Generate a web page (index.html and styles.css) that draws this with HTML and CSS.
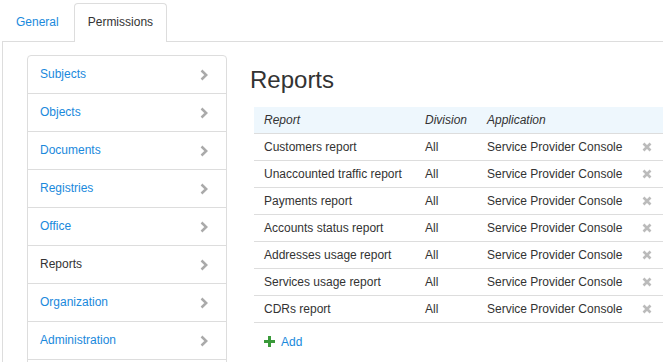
FILE: index.html
```html
<html>
<head>
    <title>Permissions</title>
    <link rel="stylesheet" href="styles.css">
</head>
<body>
<div class="wrap">
    <div class="tabs">
        <a class="tab" href="#">General</a>
        <a class="tab active" href="#">Permissions</a>
    </div>
    <div class="pane">
        <ul class="side">
            <li><a href="#">Subjects</a><svg class="chev" width="8" height="12" viewBox="0 0 8 12"><path d="M1.5 1.5 L6.2 6 L1.5 10.5" /></svg></li>
            <li><a href="#">Objects</a><svg class="chev" width="8" height="12" viewBox="0 0 8 12"><path d="M1.5 1.5 L6.2 6 L1.5 10.5" /></svg></li>
            <li><a href="#">Documents</a><svg class="chev" width="8" height="12" viewBox="0 0 8 12"><path d="M1.5 1.5 L6.2 6 L1.5 10.5" /></svg></li>
            <li><a href="#">Registries</a><svg class="chev" width="8" height="12" viewBox="0 0 8 12"><path d="M1.5 1.5 L6.2 6 L1.5 10.5" /></svg></li>
            <li><a href="#">Office</a><svg class="chev" width="8" height="12" viewBox="0 0 8 12"><path d="M1.5 1.5 L6.2 6 L1.5 10.5" /></svg></li>
            <li class="current"><span>Reports</span><svg class="chev" width="8" height="12" viewBox="0 0 8 12"><path d="M1.5 1.5 L6.2 6 L1.5 10.5" /></svg></li>
            <li><a href="#">Organization</a><svg class="chev" width="8" height="12" viewBox="0 0 8 12"><path d="M1.5 1.5 L6.2 6 L1.5 10.5" /></svg></li>
            <li><a href="#">Administration</a><svg class="chev" width="8" height="12" viewBox="0 0 8 12"><path d="M1.5 1.5 L6.2 6 L1.5 10.5" /></svg></li>
            <li class="more"></li>
        </ul>
        <div class="main">
            <h1>Reports</h1>
            <table class="grid">
                <thead>
                    <tr><th class="c1">Report</th><th class="c2">Division</th><th class="c3">Application</th><th class="c4"></th></tr>
                </thead>
                <tbody>
                    <tr><td>Customers report</td><td>All</td><td>Service Provider Console</td><td><svg class="del" width="10" height="10" viewBox="0 0 10 10"><path d="M1.5 1.5 L8.5 8.5 M8.5 1.5 L1.5 8.5" /></svg></td></tr>
                    <tr><td>Unaccounted traffic report</td><td>All</td><td>Service Provider Console</td><td><svg class="del" width="10" height="10" viewBox="0 0 10 10"><path d="M1.5 1.5 L8.5 8.5 M8.5 1.5 L1.5 8.5" /></svg></td></tr>
                    <tr><td>Payments report</td><td>All</td><td>Service Provider Console</td><td><svg class="del" width="10" height="10" viewBox="0 0 10 10"><path d="M1.5 1.5 L8.5 8.5 M8.5 1.5 L1.5 8.5" /></svg></td></tr>
                    <tr><td>Accounts status report</td><td>All</td><td>Service Provider Console</td><td><svg class="del" width="10" height="10" viewBox="0 0 10 10"><path d="M1.5 1.5 L8.5 8.5 M8.5 1.5 L1.5 8.5" /></svg></td></tr>
                    <tr><td>Addresses usage report</td><td>All</td><td>Service Provider Console</td><td><svg class="del" width="10" height="10" viewBox="0 0 10 10"><path d="M1.5 1.5 L8.5 8.5 M8.5 1.5 L1.5 8.5" /></svg></td></tr>
                    <tr><td>Services usage report</td><td>All</td><td>Service Provider Console</td><td><svg class="del" width="10" height="10" viewBox="0 0 10 10"><path d="M1.5 1.5 L8.5 8.5 M8.5 1.5 L1.5 8.5" /></svg></td></tr>
                    <tr><td>CDRs report</td><td>All</td><td>Service Provider Console</td><td><svg class="del" width="10" height="10" viewBox="0 0 10 10"><path d="M1.5 1.5 L8.5 8.5 M8.5 1.5 L1.5 8.5" /></svg></td></tr>
                </tbody>
            </table>
            <a class="add" href="#"><svg width="11" height="11" viewBox="0 0 11 11"><path d="M5.5 0 V11 M0 5.5 H11" /></svg>Add</a>
        </div>
    </div>
</div>
</body>
</html>
```

FILE: styles.css
```css
html, body {
    margin: 0;
    background-color: #fff;
    color: #333;
    font-family: "Liberation Sans", Arial, Helvetica, sans-serif;
    font-size: 12px;
    overflow: hidden;
}

a {
    color: #1a89dc;
    text-decoration: none;
}

.wrap {
    margin-left: 2px;
}

.tabs {
    display: flex;
    padding-top: 3px;
    border-bottom: 1px solid #ddd;
}

.tab {
    display: block;
    padding: 9px 13px 11px;
    line-height: 18px;
    border: 1px solid transparent;
    border-bottom: none;
    border-radius: 4px 4px 0 0;
    margin-right: 1px;
    margin-bottom: -1px;
}

.tab.active {
    color: #333;
    background-color: #fff;
    border-color: #ddd;
}

.pane {
    display: flex;
    align-items: flex-start;
    border-left: 1px solid #ddd;
    padding: 13px 0 0 24px;
}

.side {
    list-style: none;
    margin: 0;
    padding: 0;
    width: 198px;
    flex: none;
    border: 1px solid #ddd;
    border-radius: 4px 4px 0 0;
}

.side li {
    display: flex;
    align-items: center;
    justify-content: space-between;
    height: 37px;
    padding: 0 18px 0 12px;
    border-top: 1px solid #ddd;
}

.side li:first-child {
    border-top: none;
}

.side li a, .side li span {
    margin-top: -2px;
}

.chev path {
    fill: none;
    stroke: #aaa;
    stroke-width: 2.5;
}

.main {
    flex: 1;
    margin-left: 23px;
}

h1 {
    margin: 11px 0 13px;
    font-size: 24px;
    line-height: 28px;
    font-weight: normal;
    color: #333;
}

.grid {
    margin-left: 4px;
    width: 409px;
    border-collapse: collapse;
    font-size: 12px;
    color: #333;
}

.grid th {
    background-color: #eef7fd;
    font-weight: normal;
    font-style: italic;
    text-align: left;
    height: 26px;
    padding: 0 0 0 10px;
    border-bottom: 1px solid #ddd;
}

.grid td {
    height: 27px;
    padding: 0 0 0 10px;
    border-bottom: 1px solid #ddd;
    white-space: nowrap;
}

.c1 {width: 151px;}
.c2 {width: 52px;}
.c3 {width: 145px;}

.del {
    display: block;
}

.del path {
    fill: none;
    stroke: #bbb;
    stroke-width: 2.6;
}

.add {
    display: inline-flex;
    align-items: center;
    margin: 12px 0 0 14px;
    line-height: 14px;
}

.add svg {
    margin-right: 6px;
}

.add path {
    fill: none;
    stroke: #3a9a3a;
    stroke-width: 3;
}
```
